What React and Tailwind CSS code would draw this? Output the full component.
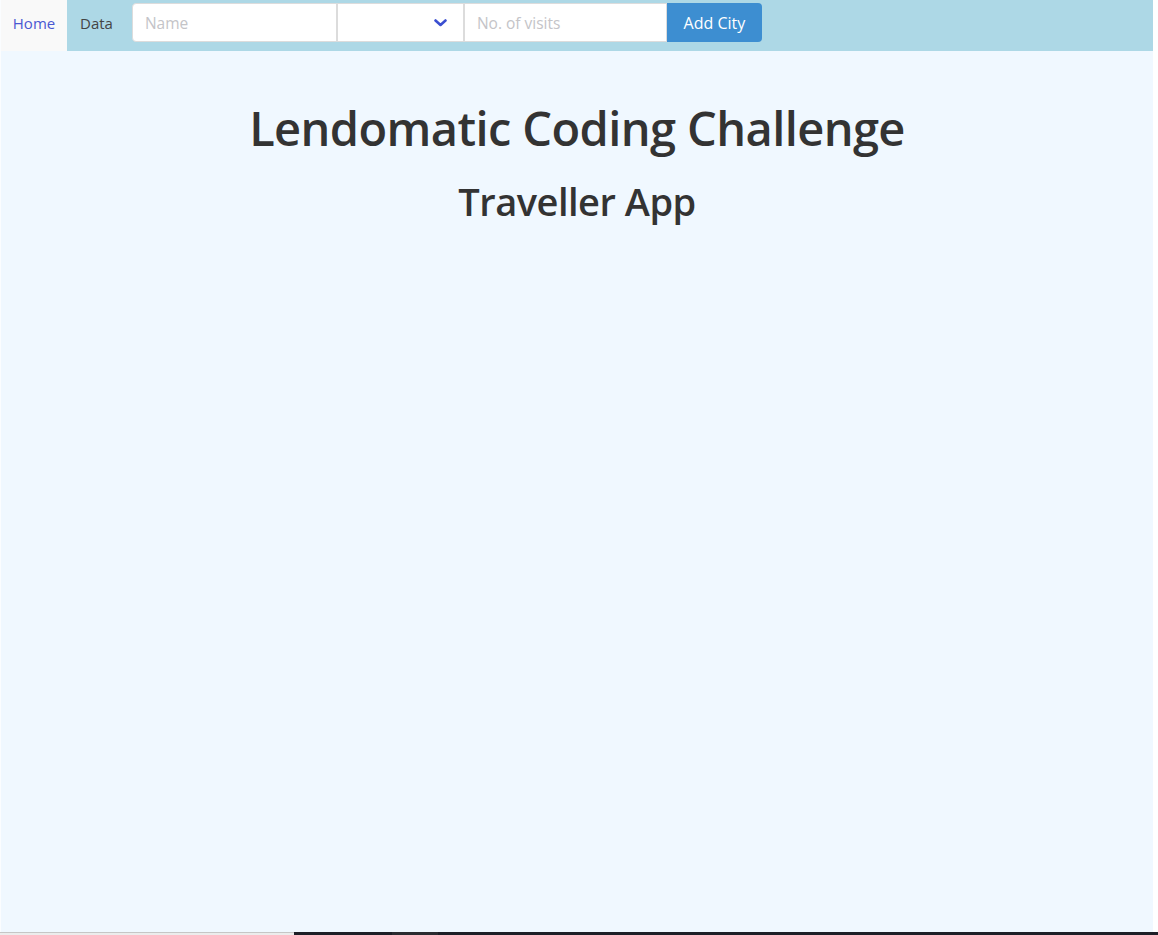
import React, { useState } from 'react'

const font = "font-['Segoe_UI','Open_Sans','Noto_Sans',sans-serif]"

function Chevron() {
  return (
    <svg width="13" height="8" viewBox="0 0 13 8" fill="none">
      <path d="M1.5 1.5l5 4.5 5-4.5" stroke="#3b4fd1" strokeWidth="2.6" strokeLinecap="round" strokeLinejoin="round" />
    </svg>
  )
}

export default function App() {
  const [name, setName] = useState('')
  const [visits, setVisits] = useState('')

  return (
    <div className={`w-[1158px] h-[935px] bg-white flex flex-col ${font}`}>
      <div className="h-[932px] flex">
        <div className="w-[1153px] flex flex-col bg-[#f0f8ff] border-l border-[#fbfdff]">
          {/* Nav bar */}
          <nav className="h-[51px] bg-[#add8e6] flex items-stretch text-[15px]">
            <a className="w-[66px] bg-[#f9f9f9] flex items-center justify-center pb-[5px] text-[#4a58d2]">Home</a>
            <a className="px-[13px] flex items-center pb-[5px] text-[#444]">Data</a>
            <form className="flex h-[39px] mt-[3px] ml-[6px] text-[15.5px]" onSubmit={(e) => e.preventDefault()}>
              <input
                value={name}
                onChange={(e) => setName(e.target.value)}
                placeholder="Name"
                className="w-[205px] h-full bg-white border border-[#dcdcdc] rounded-l-[4px] px-[12px] text-[#333] placeholder:text-[#c4c4c8] outline-none"
              />
              <div className="w-[127px] h-full bg-white border border-[#dcdcdc] flex items-center justify-end pr-[16px]">
                <Chevron />
              </div>
              <input
                value={visits}
                onChange={(e) => setVisits(e.target.value)}
                placeholder="No. of visits"
                className="w-[203px] h-full bg-white border border-[#dcdcdc] px-[12px] text-[#333] placeholder:text-[#c4c4c8] outline-none"
              />
              <button className="w-[95px] h-full bg-[#3d8ed1] text-white text-[16px] rounded-r-[4px]">Add City</button>
            </form>
          </nav>

          <main className="flex flex-col items-center text-[#333]">
            <h1 className="mt-[49px] text-[47px] leading-[1.2] font-semibold tracking-[-0.6px]">Lendomatic Coding Challenge</h1>
            <h2 className="mt-[23px] text-[38px] leading-[1.2] font-semibold tracking-[-0.5px]">Traveller App</h2>
          </main>
        </div>
      </div>
      <div className="h-[3px] flex">
        <div className="w-[294px] bg-[#ececec] border-t border-[#c6c6c6]" />
        <div className="w-[98px] bg-[#1d1f27]" />
        <div className="w-[46px] bg-[#2b2c31]" />
        <div className="flex-1 bg-[#1d1f27]" />
      </div>
    </div>
  )
}
